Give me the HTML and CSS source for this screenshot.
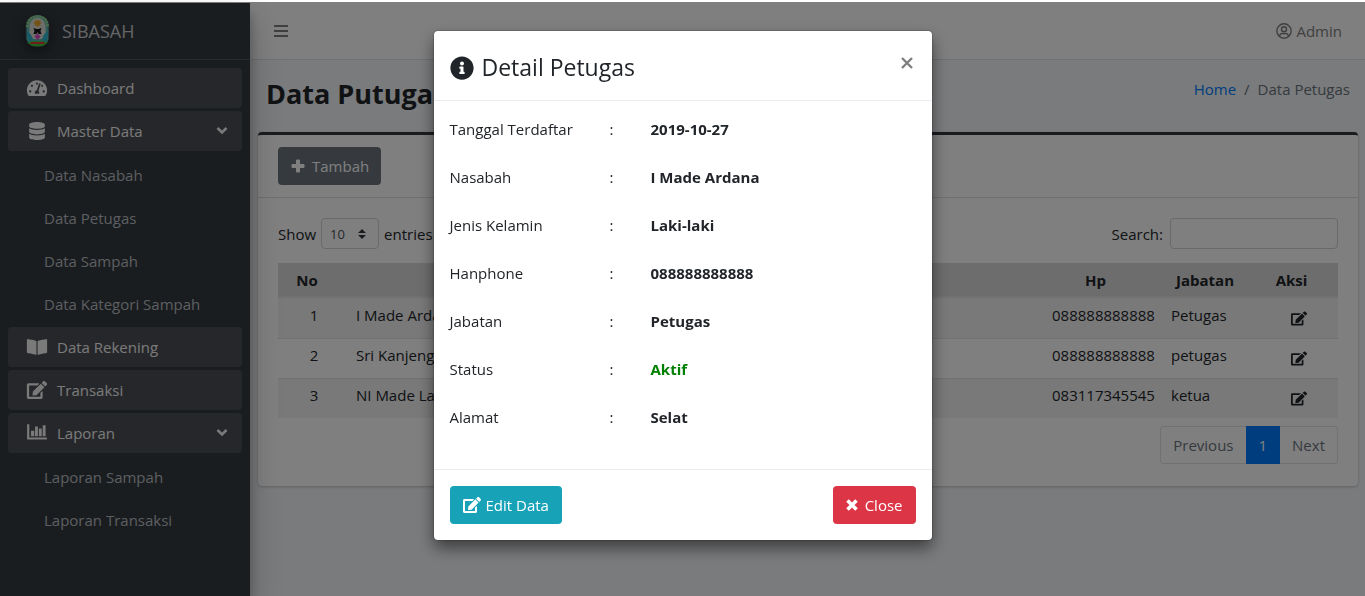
FILE: index.html
```html
<!DOCTYPE html>
<html lang="id">
<head>
<meta charset="utf-8">
<meta name="viewport" content="width=device-width, initial-scale=1">
<title>SIBASAH - Data Petugas</title>
<link rel="stylesheet" href="styles.css">
</head>
<body>
<svg class="sprite" aria-hidden="true">
  <symbol id="i-dash" viewBox="0 0 576 512"><path d="M288 32C128.94 32 0 160.94 0 320c0 52.8 14.25 102.26 39.06 144.8 5.61 9.62 16.3 15.2 27.44 15.2h443c11.14 0 21.83-5.58 27.44-15.2C561.75 422.26 576 372.8 576 320c0-159.06-128.94-288-288-288zm0 64c14.71 0 26.58 10.13 30.32 23.65-1.11 2.26-2.64 4.23-3.45 6.67l-9.22 27.67c-5.13 3.49-10.97 6.01-17.64 6.01-17.67 0-32-14.33-32-32S270.33 96 288 96zM96 384c-17.67 0-32-14.33-32-32s14.33-32 32-32 32 14.33 32 32-14.33 32-32 32zm48-160c-17.67 0-32-14.33-32-32s14.33-32 32-32 32 14.33 32 32-14.33 32-32 32zm246.77-72.41l-61.33 184C343.13 347.33 352 364.54 352 384c0 11.72-3.38 22.55-8.88 32H232.88c-5.5-9.45-8.88-20.28-8.88-32 0-33.94 26.5-61.43 59.9-63.59l61.34-184.01c4.17-12.56 17.73-19.45 30.36-15.17 12.57 4.19 19.35 17.79 15.17 30.36zm14.66 57.2l15.52-46.55c3.47-1.29 7.13-2.23 11.05-2.23 17.67 0 32 14.33 32 32s-14.33 32-32 32c-11.38-.01-21.27-6.07-26.57-15.22zM480 384c-17.67 0-32-14.33-32-32s14.33-32 32-32 32 14.33 32 32-14.33 32-32 32z"/></symbol>
  <symbol id="i-db" viewBox="0 0 448 512"><path d="M448 73.143v45.714C448 159.143 347.667 192 224 192S0 159.143 0 118.857V73.143C0 32.857 100.333 0 224 0s224 32.857 224 73.143zM448 176v102.857C448 319.143 347.667 352 224 352S0 319.143 0 278.857V176c48.125 33.143 136.208 48.572 224 48.572S399.874 209.143 448 176zm0 160v102.857C448 479.143 347.667 512 224 512S0 479.143 0 438.857V336c48.125 33.143 136.208 48.572 224 48.572S399.874 369.143 448 336z"/></symbol>
  <symbol id="i-book" viewBox="0 0 576 512"><path d="M542.22 32.05c-54.8 3.11-163.72 14.43-230.96 55.59-4.64 2.84-7.27 7.89-7.27 13.17v363.87c0 11.55 12.63 18.85 23.28 13.49 69.18-34.82 169.23-44.32 218.7-46.92 16.89-.89 30.02-14.43 30.02-30.66V62.75c.01-17.71-15.35-31.74-33.77-30.7zM264.73 87.64C197.5 46.48 88.58 35.17 33.78 32.05 15.36 31.01 0 45.04 0 62.75V400.6c0 16.24 13.13 29.78 30.02 30.66 49.49 2.6 149.59 12.11 218.77 46.95 10.62 5.35 23.21-1.94 23.21-13.46V100.63c0-5.29-2.62-10.14-7.27-12.99z"/></symbol>
  <symbol id="i-edit" viewBox="0 0 576 512"><path d="M402.6 83.2l90.2 90.2c3.8 3.8 3.8 10 0 13.8L274.4 405.6l-92.8 10.3c-12.4 1.4-22.9-9.1-21.5-21.5l10.3-92.8L388.8 83.2c3.8-3.8 10-3.8 13.8 0zm162-22.9l-48.8-48.8c-15.2-15.2-39.9-15.2-55.2 0l-35.4 35.4c-3.8 3.8-3.8 10 0 13.8l90.2 90.2c3.8 3.8 10 3.8 13.8 0l35.4-35.4c15.2-15.3 15.2-40 0-55.2zM384 346.2V448H64V128h229.8c3.2 0 6.2-1.3 8.5-3.5l40-40c7.6-7.6 2.2-20.5-8.5-20.5H48C21.5 64 0 85.5 0 112v352c0 26.5 21.5 48 48 48h352c26.5 0 48-21.5 48-48V306.2c0-10.7-12.9-16-20.5-8.5l-40 40c-2.2 2.3-3.5 5.3-3.5 8.5z"/></symbol>
  <symbol id="i-chart" viewBox="0 0 20 16"><path d="M1 0h2v12h16v2H1zM4.500 6H7.500v5h-3zM8.200 2h2.600v9H8.200zM11.700 4h2.600v7h-2.600zM15.200 1h2.600v10h-2.600z"/></symbol>
  <symbol id="i-info" viewBox="0 0 512 512"><path d="M256 8C119.043 8 8 119.083 8 256c0 136.997 111.043 248 248 248s248-111.003 248-248C504 119.083 392.957 8 256 8zm0 110c23.196 0 42 18.804 42 42s-18.804 42-42 42-42-18.804-42-42 18.804-42 42-42zm56 254c0 6.627-5.373 12-12 12h-88c-6.627 0-12-5.373-12-12v-24c0-6.627 5.373-12 12-12h12v-64h-12c-6.627 0-12-5.373-12-12v-24c0-6.627 5.373-12 12-12h64c6.627 0 12 5.373 12 12v100h12c6.627 0 12 5.373 12 12v24z"/></symbol>
  <symbol id="i-down" viewBox="0 0 12 8"><path d="M1.500 1L6 5.500 10.500 1" fill="none" stroke="currentColor" stroke-width="2.600"/></symbol>
  <symbol id="i-plus" viewBox="0 0 14 14"><path d="M5.500 1h3v4.500H13v3H8.500V13h-3V8.500H1v-3h4.500z" stroke="currentColor" stroke-width="1" stroke-linejoin="round"/></symbol>
  <symbol id="i-times" viewBox="0 0 12 12"><path d="M1.500 1.500l9 9M10.500 1.500l-9 9" stroke="currentColor" stroke-width="3.600"/></symbol>
  <symbol id="i-close" viewBox="0 0 12 12"><path d="M1 1l10 10M11 1L1 11" stroke="currentColor" stroke-width="2.400"/></symbol>
  <symbol id="i-user" viewBox="0 0 16 16"><g fill="none" stroke="currentColor" stroke-width="1.400"><circle cx="8" cy="8" r="7.200"/><circle cx="8" cy="6.200" r="2.500"/><path d="M3.500 13.200c.4-2 1.500-2.800 3-2.800.6.300 2.400.300 3 0 1.500 0 2.600.8 3 2.800"/></g></symbol>
  <symbol id="i-bars" viewBox="0 0 14 12"><path d="M0 0h14v2H0zM0 5h14v2H0zM0 10h14v2H0z"/></symbol>
  <symbol id="i-logo" viewBox="0 0 24 32">
    <path d="M1 24V11C1 4 6 0 12 0s11 4 11 11v13l-2 5H3z" fill="#5fb8b4"/>
    <path d="M2 12C2 5 6 1.500 12 1.500S22 5 22 12" fill="none" stroke="#9ad48a" stroke-width="3" stroke-dasharray="2 1"/>
    <path d="M4 24V12c0-5 3.500-9 8-9s8 4 8 9v12z" fill="#dcdcd4"/>
    <path d="M12 4l1 2 2-1-.5 2 2 1-2 1 .5 2-2-.5-1 2-1-2-2 .5.500-2-2-1 2-1L9 5l2 1z" fill="#e8a52c"/>
    <path d="M8 13l3 1h2l3-1-1 3 1 3h-3l-1-2-1 2H8l1-3z" fill="#16161c"/>
    <path d="M12 18.500l3 3-3 3.500-3-3.500z" fill="#e04ccc"/>
    <path d="M1 16l4 3 3 6-5 2zM23 16l-4 3-3 6 5 2z" fill="#2fb6d0"/>
    <path d="M2 27q10-2 20 0v3q-10 3-20 0z" fill="#3fc238"/>
    <path d="M5 28h14" stroke="#e03a3a" stroke-width="2"/>
  </symbol>
</svg>

<div class="app">
  <aside class="sidebar">
    <a class="brand" href="#"><svg class="logo" aria-hidden="true"><use href="#i-logo"/></svg><span>SIBASAH</span></a>
    <nav class="menu">
      <a class="item" href="#"><svg class="ico"><use href="#i-dash"/></svg><span>Dashboard</span></a>
      <a class="item" href="#"><svg class="ico"><use href="#i-db"/></svg><span>Master Data</span><svg class="caret"><use href="#i-down"/></svg></a>
      <div class="submenu">
        <a class="sub" href="#">Data Nasabah</a>
        <a class="sub" href="#">Data Petugas</a>
        <a class="sub" href="#">Data Sampah</a>
        <a class="sub" href="#">Data Kategori Sampah</a>
      </div>
      <a class="item" href="#"><svg class="ico"><use href="#i-book"/></svg><span>Data Rekening</span></a>
      <a class="item" href="#"><svg class="ico"><use href="#i-edit"/></svg><span>Transaksi</span></a>
      <a class="item" href="#"><svg class="ico"><use href="#i-chart"/></svg><span>Laporan</span><svg class="caret"><use href="#i-down"/></svg></a>
      <div class="submenu">
        <a class="sub" href="#">Laporan Sampah</a>
        <a class="sub" href="#">Laporan Transaksi</a>
      </div>
    </nav>
  </aside>

  <div class="main">
    <header class="topbar">
      <button class="toggle" type="button" aria-label="Menu"><svg class="bars"><use href="#i-bars"/></svg></button>
      <a class="user" href="#"><svg class="ico-user"><use href="#i-user"/></svg>Admin</a>
    </header>
    <div class="heading">
      <h1 class="title">Data Putugas</h1>
      <nav class="crumbs"><a class="link" href="#">Home</a><span>/</span><span>Data Petugas</span></nav>
    </div>
    <section class="card">
      <div class="card-head">
        <button class="btn btn-add" type="button"><svg class="ico-plus"><use href="#i-plus"/></svg>Tambah</button>
      </div>
      <div class="card-body">
        <div class="tools">
          <label class="length">Show
            <span class="select-wrap"><select class="select"><option>10</option></select><svg class="sort" viewBox="0 0 8 10"><path d="M0 4l4-4 4 4zM0 6h8l-4 4z"/></svg></span>
            entries</label>
          <label class="search">Search:<input class="input" type="search"></label>
        </div>
        <table class="table">
          <thead><tr><th class="c-no">No</th><th class="c-name" aria-label="Nama"></th><th class="c-hp">Hp</th><th class="c-jab">Jabatan</th><th class="c-act">Aksi</th></tr></thead>
          <tbody>
            <tr><td class="num">1</td><td>I Made Ardana</td><td>088888888888</td><td>Petugas</td><td class="act"><a class="edit" href="#" aria-label="Edit"><svg class="ico-edit"><use href="#i-edit"/></svg></a></td></tr>
            <tr><td class="num">2</td><td>Sri Kanjeng</td><td>088888888888</td><td>petugas</td><td class="act"><a class="edit" href="#" aria-label="Edit"><svg class="ico-edit"><use href="#i-edit"/></svg></a></td></tr>
            <tr><td class="num">3</td><td>NI Made La</td><td>083117345545</td><td>ketua</td><td class="act"><a class="edit" href="#" aria-label="Edit"><svg class="ico-edit"><use href="#i-edit"/></svg></a></td></tr>
          </tbody>
        </table>
        <nav class="pager">
          <a class="page" href="#">Previous</a><a class="page page-on" href="#">1</a><a class="page" href="#">Next</a>
        </nav>
      </div>
    </section>
  </div>
</div>

<div class="backdrop"></div>
<div class="modal-layer">
  <div class="modal" role="dialog" aria-modal="true" aria-labelledby="modal-title">
    <div class="modal-head">
      <h2 class="modal-title" id="modal-title"><svg class="ico-info"><use href="#i-info"/></svg>Detail Petugas</h2>
      <button class="close" type="button" aria-label="Tutup"><svg class="ico-close"><use href="#i-close"/></svg></button>
    </div>
    <dl class="details">
      <div class="row"><dt>Tanggal Terdaftar</dt><dd>:</dd><dd class="val">2019-10-27</dd></div>
      <div class="row"><dt>Nasabah</dt><dd>:</dd><dd class="val">I Made Ardana</dd></div>
      <div class="row"><dt>Jenis Kelamin</dt><dd>:</dd><dd class="val">Laki-laki</dd></div>
      <div class="row"><dt>Hanphone</dt><dd>:</dd><dd class="val">088888888888</dd></div>
      <div class="row"><dt>Jabatan</dt><dd>:</dd><dd class="val">Petugas</dd></div>
      <div class="row"><dt>Status</dt><dd>:</dd><dd class="val active">Aktif</dd></div>
      <div class="row"><dt>Alamat</dt><dd>:</dd><dd class="val">Selat</dd></div>
    </dl>
    <div class="modal-foot">
      <button class="btn btn-edit" type="button"><svg class="ico-btn"><use href="#i-edit"/></svg>Edit Data</button>
      <button class="btn btn-close" type="button"><svg class="ico-x"><use href="#i-times"/></svg>Close</button>
    </div>
  </div>
</div>
</body>
</html>
```
FILE: styles.css
```css
* { box-sizing: border-box; }
html { height: 100%; }
body {
  margin: 0;
  min-height: 100%;
  font: 15px/24px "Open Sans", "Noto Sans", sans-serif;
  color: #212529;
  background: #fff;
}
a { color: inherit; text-decoration: none; }
button, input, select { font: inherit; margin: 0; }
svg { display: block; fill: currentColor; flex: none; }
.sprite { position: absolute; width: 0; height: 0; }

.app { display: flex; min-height: 100vh; padding-top: 3px; }
.sidebar {
  width: 250px;
  flex: none;
  position: relative;
  background: #343a40;
  box-shadow: 0 14px 28px rgba(0,0,0,.25), 0 10px 10px rgba(0,0,0,.22);
}
.brand {
  display: flex;
  align-items: center;
  gap: 12px;
  height: 57px;
  padding-left: 25px;
  border-bottom: 1px solid #4b545c;
  color: #c8cbce;
  font-size: 18px;
}
.logo { width: 25px; height: 32px; border-radius: 12px; box-shadow: 0 4px 12px rgba(0,0,0,.5); }
.menu { display: flex; flex-direction: column; gap: 3px; padding: 8px; }
.item {
  display: flex;
  align-items: center;
  gap: 9px;
  height: 40px;
  padding: 0 14px 0 18px;
  border-radius: 4px;
  background: #4c4f55;
  color: #f4f4f4;
}
.ico { width: 22px; height: 18px; }
.caret { width: 12px; height: 8px; margin-left: auto; }
.submenu { display: flex; flex-direction: column; gap: 3px; padding-top: 1px; }
.sub { height: 40px; padding: 8px 0 8px 36px; color: #b9bdc2; }

.main { flex: 1; min-width: 0; background: #f4f6f9; }
.topbar {
  display: flex;
  align-items: center;
  justify-content: space-between;
  height: 57px;
  padding: 0 23px;
  background: #fff;
  border-bottom: 1px solid #dee2e6;
  color: #7f7f7f;
}
.toggle { padding: 0 1px; border: 0; background: none; color: #7f7f7f; }
.bars { width: 14px; height: 12px; }
.user { display: flex; align-items: center; gap: 4px; }
.ico-user { width: 16px; height: 16px; }
.heading {
  display: flex;
  justify-content: space-between;
  padding: 16px 15px 16px 16px;
}
.title { margin: 0; font-size: 27px; line-height: 36px; font-weight: 700; }
.crumbs { display: flex; gap: 8px; padding-top: 1px; color: #6c757d; }
.link { color: #007bff; }

.card {
  margin: 4px 7px 0 8px;
  border-top: 3px solid #343a40;
  border-radius: 4px;
  background: #fff;
  box-shadow: 0 0 1px rgba(0,0,0,.13), 0 1px 3px rgba(0,0,0,.2);
}
.card-head { padding: 12px 20px; border-bottom: 1px solid #dfdfdf; }
.btn {
  display: flex;
  align-items: center;
  height: 38px;
  padding: 0 13px;
  border: 0;
  border-radius: 4px;
  color: #fff;
}
.btn-add { gap: 7px; padding: 0 12px 0 13px; background: #6c757d; }
.ico-plus { width: 14px; height: 14px; }
.card-body { padding: 20px 20px 22px; }
.tools { display: flex; justify-content: space-between; height: 31px; margin-bottom: 14px; }
.length, .search { display: flex; align-items: center; gap: 5px; }
.search { gap: 7px; }
.select-wrap { display: grid; align-items: center; width: 58px; }
.select {
  grid-area: 1 / 1;
  appearance: none;
  width: 100%;
  height: 31px;
  padding: 0 8px;
  border: 1px solid #ced4da;
  border-radius: 4px;
  background: #fff;
  color: #495057;
  font-size: 13px;
}
.sort { grid-area: 1 / 1; justify-self: end; width: 8px; height: 10px; margin-right: 13px; pointer-events: none; color: #343a40; }
.input { width: 168px; height: 31px; border: 1px solid #ced4da; border-radius: 4px; background: #fff; }

.table { width: 100%; table-layout: fixed; border-spacing: 0; }
.table th { height: 35px; padding: 0 20px 0 12px; background: #dbdbdb; border-bottom: 2px solid #dee2e6; text-align: center; }
.table .c-act { padding-right: 26px; }
.table td { height: 40px; padding: 5px 12px 11px; border-top: 1px solid #dee2e6; vertical-align: top; line-height: 23px; }
.table tbody tr:first-child td { border-top-color: #f2f2f2; }
.table tbody tr:nth-child(odd) { background: #f2f2f2; }
.c-no { width: 66px; }
.c-hp { width: 119px; }
.c-jab { width: 100px; }
.c-act { width: 79px; }
.table .num { padding-left: 18px; text-align: center; }
.table .act { padding: 12px 12px 0; }
.edit { display: flex; justify-content: center; }
.ico-edit { width: 16px; height: 15px; }

.pager { display: flex; justify-content: flex-end; margin-top: 8px; }
.page {
  padding: 6px 12px;
  border: 1px solid #dee2e6;
  color: #6c757d;
}
.page:first-child { border-right: 0; border-radius: 4px 0 0 4px; }
.page:last-child { border-left: 0; border-radius: 0 4px 4px 0; }
.page-on { border-color: #007bff; background: #007bff; color: #fff; }

.backdrop { position: fixed; inset: 2px 0 0; background: rgba(0,0,0,.5); }
.modal-layer { position: fixed; inset: 0; padding: 31px 8px; overflow: auto; }
.modal {
  max-width: 498px;
  margin: 0 auto;
  border-radius: 4px;
  background: #fff;
  box-shadow: 0 8px 16px rgba(0,0,0,.5), 0 0 2px rgba(0,0,0,.5);
}
.modal-head {
  display: flex;
  justify-content: space-between;
  padding: 18px 16px 14px;
  border-bottom: 1px solid #e9ecef;
}
.modal-title { display: flex; align-items: center; gap: 8px; margin: 0; font-size: 23px; line-height: 37px; font-weight: 400; }
.ico-info { width: 24px; height: 24px; }
.close { align-self: flex-start; padding: 8px 3px; border: 0; background: none; color: #7f7f7f; }
.ico-close { width: 12px; height: 12px; }
.details { margin: 0; padding: 16px; }
.row { display: grid; grid-template-columns: 160px 41px 1fr; height: 48px; }
.row dd { margin: 0; }
.row .val { font-weight: 700; }
.row .active { color: #008000; }
.modal-foot {
  display: flex;
  justify-content: space-between;
  padding: 16px;
  border-top: 1px solid #e9ecef;
}
.btn-edit { gap: 5px; background: #17a2b8; }
.btn-close { gap: 7px; background: #dc3545; }
.ico-btn { width: 18px; height: 16px; }
.ico-x { width: 12px; height: 12px; }
```
